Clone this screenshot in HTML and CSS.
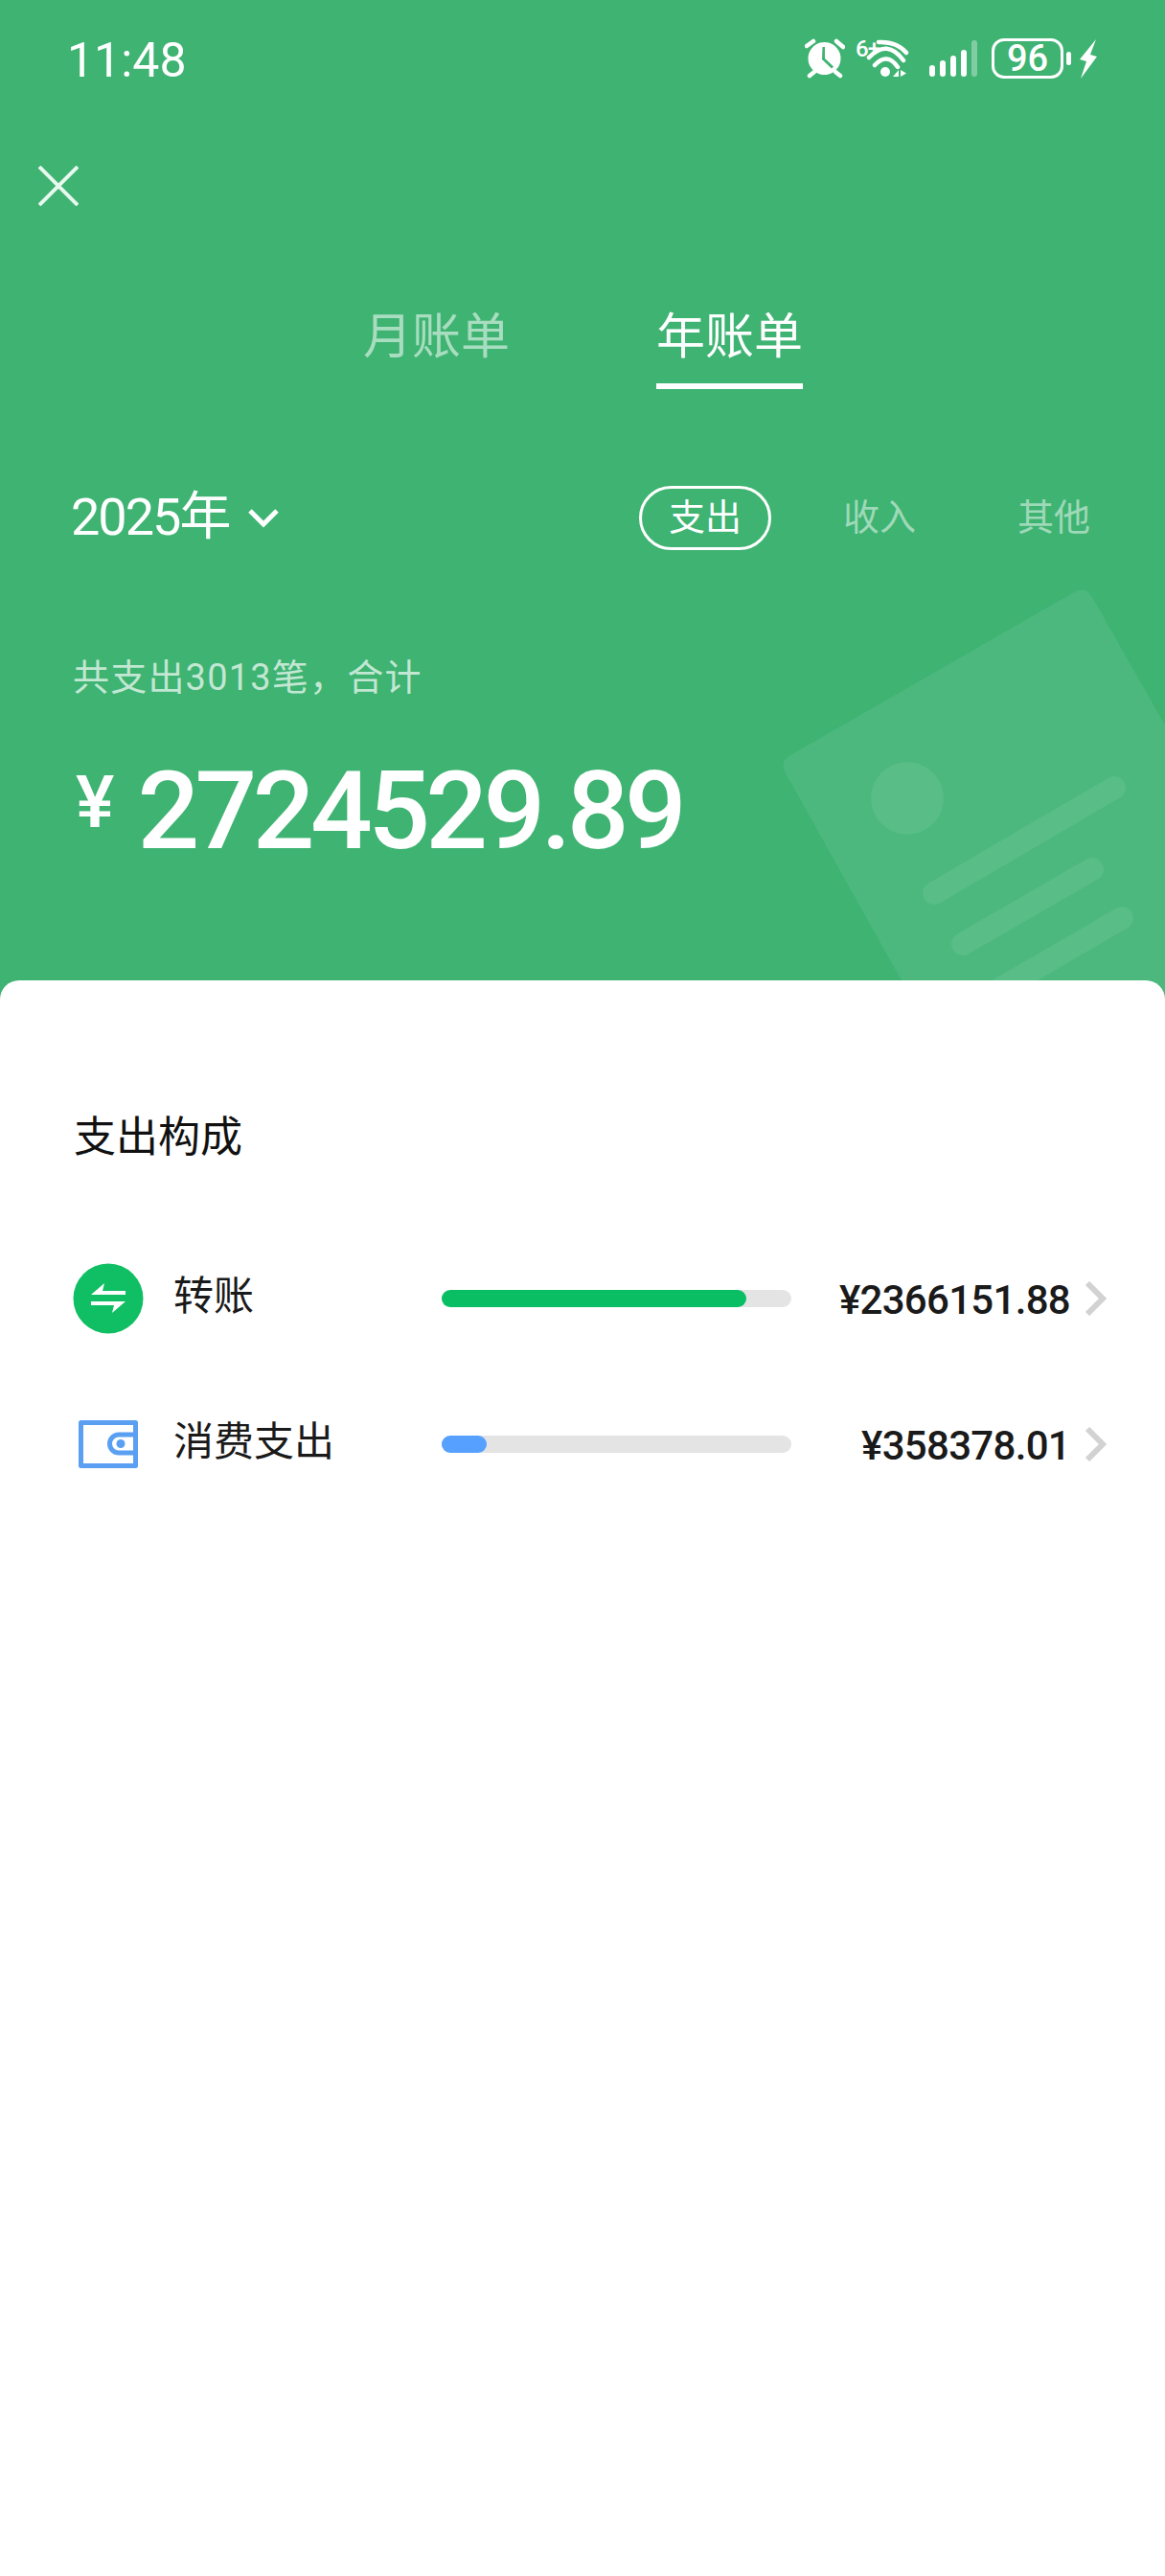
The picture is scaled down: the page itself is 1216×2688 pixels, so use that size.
FILE: index.html
```html
<!DOCTYPE html>
<html lang="zh-CN">
<head>
    <meta charset="UTF-8">
    <meta name="viewport" content="width=device-width, initial-scale=1.0">
    <title>年账单</title>
    <link rel="stylesheet" href="styles.css">
</head>
<body>
    <div class="page">
        <div class="hero">
            <svg class="hero-art" width="1216" height="1043" viewBox="0 0 1216 1043">
                <path class="art-card" d="M825 788 L1121 618 Q1133 611 1140 623 L1420 1115 L1040 1200 L820 807 Q813 795 825 788 Z"/>
                <circle class="art-dot" cx="947" cy="833" r="38"/>
                <path class="art-line" d="M975 932 L1163 822 M1005 985 L1140 907 M1030 1040 L1171 958"/>
            </svg>

            <div class="status-bar">
                <span class="clock">11:48</span>
                <div class="status-icons">
                    <svg width="42" height="42" viewBox="0 0 42 42">
                        <path class="alarm-line" d="M2 8 L9 3 M33 3 L40 9 M5 39 L10 35 M37 39 L32 35"/>
                        <path fill="#fff" fill-rule="evenodd" d="M20.5 4 a17 17 0 1 0 0.01 0 Z M18.5 9 h2.5 v12 l9 8.5 -2 2 -10 -9.5 Z"/>
                    </svg>
                    <div class="wifi">
                        <span class="wifi-tag">6+</span>
                        <svg width="56" height="42" viewBox="0 0 56 42">
                            <path class="wifi-arc" d="M24 4 Q43 3 53 15 M14 20 Q33 0 50 23 M20 28 Q33 14 44 30"/>
                            <circle cx="31" cy="35" r="5" fill="#fff"/>
                            <path fill="#fff" d="M45 33 v7 h-6 Z M47 33 l6 3.5 -6 3.5 Z"/>
                        </svg>
                    </div>
                    <div class="signal">
                        <i class="bar-1"></i><i class="bar-2"></i><i class="bar-3"></i><i class="bar-4"></i><i class="bar-5"></i>
                    </div>
                    <div class="battery"><span>96</span></div>
                    <i class="battery-tip"></i>
                    <svg class="ic-bolt" width="20" height="42" viewBox="0 0 20 42">
                        <path fill="#fff" d="M18 1 L1 22 L8 24 L2 42 L19 19 L12 17 Z"/>
                    </svg>
                </div>
            </div>

            <div class="close-row">
                <svg width="42" height="42" viewBox="0 0 42 42">
                    <path class="close-x" d="M1 1 L41 41 M41 1 L1 41"/>
                </svg>
            </div>

            <div class="tabs">
                <div class="tab">月账单</div>
                <div class="tab active">年账单</div>
            </div>

            <div class="filter-row">
                <div class="year">
                    <span>2025年</span>
                    <svg width="34" height="22" viewBox="0 0 34 22">
                        <path class="chevron" d="M3 4 L17 18 L31 4"/>
                    </svg>
                </div>
                <div class="types">
                    <div class="type active">支出</div>
                    <div class="type">收入</div>
                    <div class="type">其他</div>
                </div>
            </div>

            <p class="summary">共支出3013笔，合计</p>
            <div class="total">
                <span class="yen">¥</span>
                <span class="total-num">2724529.89</span>
            </div>
        </div>

        <div class="sheet">
            <h2>支出构成</h2>

            <div class="row">
                <div class="row-icon">
                    <svg width="74" height="74" viewBox="0 0 74 74">
                        <circle cx="37" cy="37" r="36.5" fill="#10bf63"/>
                        <path fill="#fff" d="M19 33 L33 21 L31 29 L55 29 L55 33 Z M19 40 L55 40 L41 52 L43 44 L19 44 Z"/>
                    </svg>
                </div>
                <div class="row-name">转账</div>
                <div class="track"><div class="fill fill-green" style="width: 87%"></div></div>
                <div class="row-amount">¥2366151.88</div>
                <svg class="row-arrow" width="24" height="36" viewBox="0 0 24 36">
                    <path d="M3 2 L19 18 L3 34"/>
                </svg>
            </div>

            <div class="row">
                <div class="row-icon">
                    <svg width="62" height="50" viewBox="0 0 62 50">
                        <path class="wallet" d="M2.5 2.5 H59.5 V47.5 H2.5 Z"/>
                        <path class="wallet" d="M59.5 15 H42 a9.5 9.5 0 0 0 0 19 H59.5"/>
                        <circle cx="44" cy="24.5" r="4.5" fill="#5b9ff2"/>
                    </svg>
                </div>
                <div class="row-name">消费支出</div>
                <div class="track"><div class="fill fill-blue" style="width: 13%"></div></div>
                <div class="row-amount">¥358378.01</div>
                <svg class="row-arrow" width="24" height="36" viewBox="0 0 24 36">
                    <path d="M3 2 L19 18 L3 34"/>
                </svg>
            </div>
        </div>
    </div>
</body>
</html>
```
FILE: styles.css
```css
* {
    box-sizing: border-box;
}
body {
    margin: 0;
    background: #fff;
    font-family: Roboto, "Noto Sans CJK SC", sans-serif;
}
svg {
    display: block;
    flex-shrink: 0;
}
.page {
    width: 1216px;
    height: 2688px;
    overflow: hidden;
    background: #fff;
}

/* green top part */
.hero {
    position: relative;
    height: 1043px;
    overflow: hidden;
    background: #3eb372;
    color: #fff;
}
.hero-art {
    position: absolute;
    top: 0;
    left: 0;
}
.art-card {
    fill: #4cb87d;
}
.art-dot {
    fill: #58bd87;
}
.art-line {
    fill: none;
    stroke: #58bd87;
    stroke-width: 24;
    stroke-linecap: round;
}

.status-bar {
    position: relative;
    display: flex;
    justify-content: space-between;
    align-items: center;
    height: 42px;
    margin-top: 40px;
    padding: 0 70px;
}
.clock {
    padding-top: 3px;
    font-size: 50px;
    line-height: 42px;
}
.status-icons {
    display: flex;
    align-items: center;
}
.alarm-line {
    fill: none;
    stroke: #fff;
    stroke-width: 4.5;
    stroke-linecap: round;
}
.wifi {
    position: relative;
    margin-left: 11px;
}
.wifi-tag {
    position: absolute;
    top: 0;
    left: 0;
    font-size: 24px;
    line-height: 22px;
    font-weight: 500;
    letter-spacing: -1px;
}
.wifi-arc {
    fill: none;
    stroke: #fff;
    stroke-width: 4.5;
    stroke-linecap: round;
}
.signal {
    display: flex;
    align-items: flex-end;
    gap: 5px;
    height: 38px;
    margin-left: 21px;
}
.signal i {
    display: block;
    width: 6px;
    border-radius: 3px;
    background: #fff;
}
.bar-1 { height: 12px; }
.bar-2 { height: 17px; }
.bar-3 { height: 22px; }
.bar-4 { height: 28px; }
.signal .bar-5 {
    height: 38px;
    background: rgba(255, 255, 255, 0.35);
}
.battery {
    display: flex;
    justify-content: center;
    align-items: center;
    width: 75px;
    height: 42px;
    margin-left: 15px;
    border: 3px solid #fff;
    border-radius: 13px;
    font-size: 38px;
    line-height: 36px;
    font-weight: 500;
}
.battery-tip {
    display: block;
    width: 5px;
    height: 14px;
    margin-left: 3px;
    border-radius: 3px;
    background: #fff;
}
.ic-bolt {
    margin-left: 8px;
}

.close-row {
    position: relative;
    padding: 91px 0 0 40px;
}
.close-x {
    fill: none;
    stroke: #e8f8ee;
    stroke-width: 4;
}

.tabs {
    position: relative;
    display: flex;
    justify-content: center;
    align-items: flex-start;
    gap: 153px;
    margin-top: 98px;
    padding-left: 1px;
    font-size: 51px;
}
.tab {
    height: 93px;
    line-height: 78px;
    color: rgba(255, 255, 255, 0.55);
}
.tab.active {
    border-bottom: 6px solid #fff;
    color: #fff;
}

.filter-row {
    position: relative;
    display: flex;
    justify-content: space-between;
    align-items: center;
    height: 68px;
    margin-top: 100px;
    padding: 0 78px 0 74px;
}
.year {
    display: flex;
    align-items: center;
    gap: 19px;
    font-size: 54px;
    letter-spacing: -2px;
}
.year span {
    margin-bottom: 12px;
}
.chevron {
    fill: none;
    stroke: #fff;
    stroke-width: 5;
}
.types {
    display: flex;
    align-items: center;
}
.type {
    width: 76px;
    margin-left: 106px;
    font-size: 38px;
    line-height: 68px;
    text-align: center;
    white-space: nowrap;
    color: rgba(255, 255, 255, 0.5);
}
.type.active {
    width: 138px;
    height: 67px;
    margin-left: 0;
    margin-right: -31px;
    border: 3px solid #fff;
    border-radius: 34px;
    line-height: 60px;
    color: #fff;
}

.summary {
    position: relative;
    margin: 108px 0 0 76px;
    font-size: 38px;
    line-height: 50px;
    letter-spacing: 1.2px;
    color: rgba(255, 255, 255, 0.7);
}
.total {
    position: relative;
    display: flex;
    align-items: flex-start;
    margin: 57px 0 0 79px;
}
.yen {
    margin-top: 10px;
    font-size: 76px;
    line-height: 76px;
    font-weight: 500;
}
.total-num {
    margin-left: 24px;
    font-size: 114px;
    line-height: 114px;
    font-weight: 500;
    letter-spacing: -4.6px;
}

/* white sheet */
.sheet {
    position: relative;
    margin-top: -20px;
    padding: 136px 0 0;
    border-radius: 20px 20px 0 0;
    background: #fff;
}
.sheet h2 {
    margin: 0 0 0 77px;
    font-size: 44px;
    line-height: 56px;
    font-weight: 400;
    color: #111;
}
.row {
    display: flex;
    align-items: center;
    height: 74px;
    margin: 0 0 78px;
    padding-left: 76px;
}
.sheet h2 + .row {
    margin-top: 103px;
}
.row-icon {
    display: flex;
    justify-content: center;
    align-items: center;
    width: 74px;
}
.row-name {
    width: 280px;
    padding: 0 0 13px 31px;
    font-size: 42px;
    color: #1a1a1a;
    white-space: nowrap;
}
.track {
    width: 365px;
    height: 18px;
    margin-left: 31px;
    border-radius: 9px;
    background: #e4e4e4;
}
.fill {
    height: 100%;
    border-radius: 9px;
}
.fill-green {
    background: #0abf63;
}
.fill-blue {
    background: #56a0ff;
}
.row-amount {
    width: 291px;
    padding-top: 2px;
    font-size: 42px;
    font-weight: 500;
    letter-spacing: -0.7px;
    color: #1a1a1a;
    text-align: right;
}
.row-arrow {
    margin-left: 15px;
}
.row-arrow path {
    fill: none;
    stroke: #d2d2d2;
    stroke-width: 6;
}
.wallet {
    fill: none;
    stroke: #5b9ff2;
    stroke-width: 5;
    stroke-linejoin: round;
}
```
